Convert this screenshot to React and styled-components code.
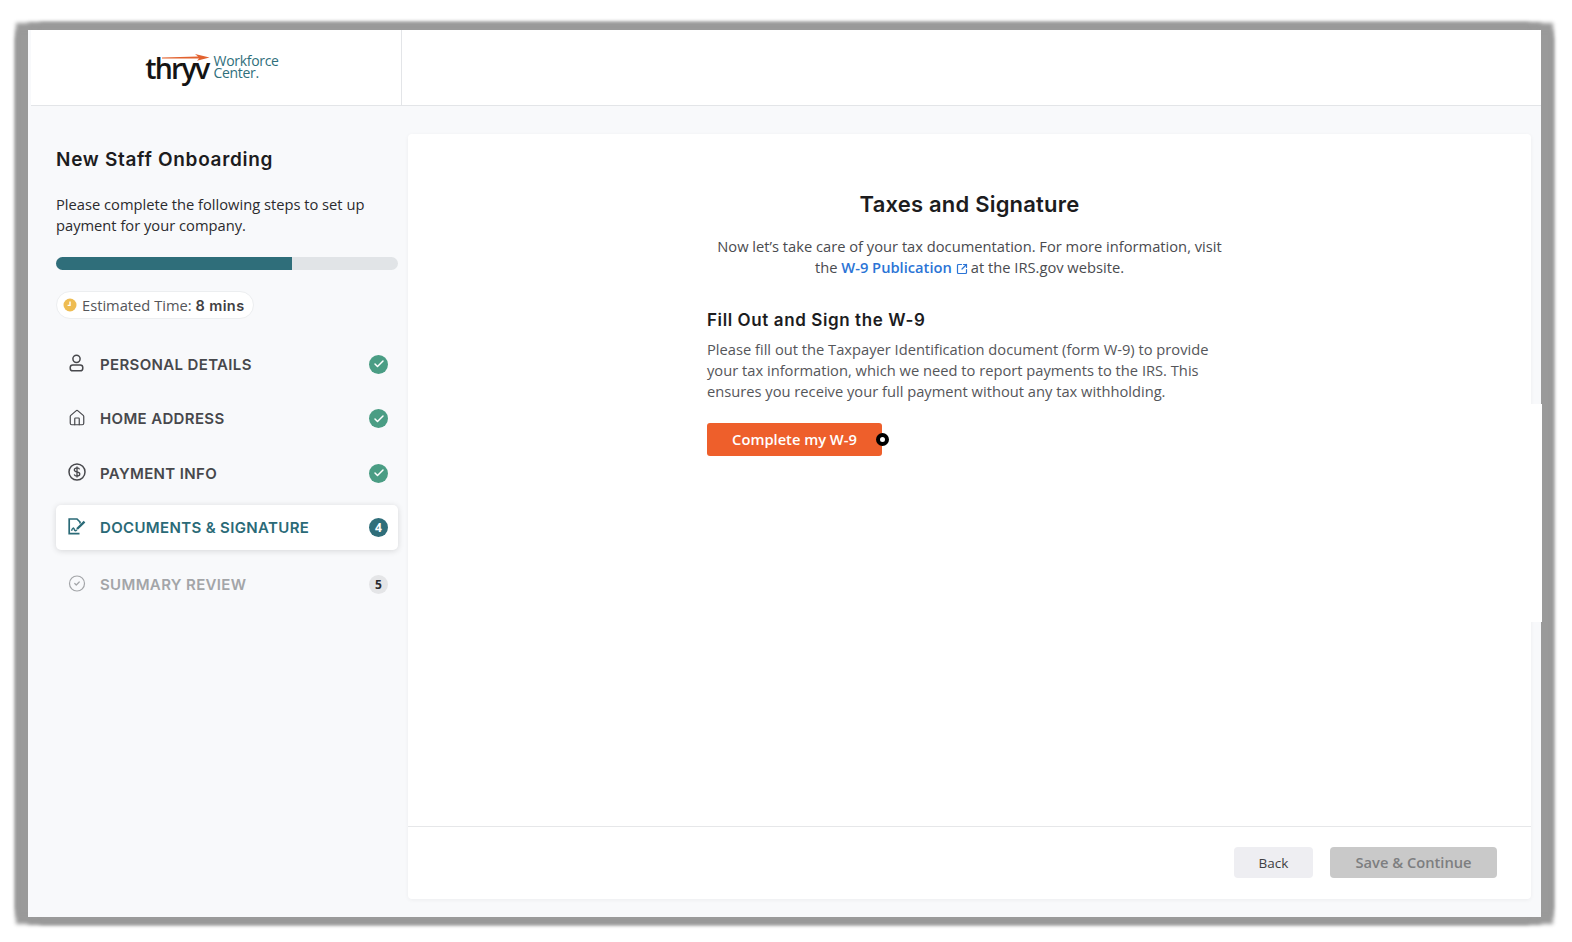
import React from 'react';
import styled, { createGlobalStyle } from 'styled-components';
import { House, CircleCheck, Check, SquareArrowOutUpRight } from 'lucide-react';

const heading = '"Inter", "Liberation Sans", sans-serif';
const body = '"Open Sans", "Liberation Sans", sans-serif';

const Global = createGlobalStyle`
  html, body {
    margin: 0;
    height: 100%;
    overflow: hidden;
    background: #fff;
  }
  * { box-sizing: border-box; }
`;

const Page = styled.div`
  padding: 30px 31px 25px 28px;
  height: 942px;
`;

const Frame = styled.div`
  position: relative;
  height: 887px;
  display: flex;
  flex-direction: column;
  background: #f8f9fb;
  box-shadow: -12px 0 4px #9a9a9a, 12px 0 4px #9a9a9a, 0 7px 4px #9a9a9a, 0 -7px 4px #9a9a9a,
    -12px 7px 4px #9a9a9a, 12px 7px 4px #9a9a9a, -12px -7px 4px #9a9a9a, 12px -7px 4px #9a9a9a;
`;

const SidePatch = styled.div`
  position: absolute;
  right: -1px;
  top: 374px;
  width: 11px;
  height: 218px;
  background: #fff;
`;

const Header = styled.header`
  height: 76px;
  margin-left: 3px;
  display: flex;
  background: #fff;
  border-bottom: 1px solid #e3e5e8;
`;

const LogoCell = styled.div`
  width: 371px;
  display: flex;
  align-items: center;
  justify-content: center;
  gap: 5px;
  padding: 0 8px 0 0;
  border-right: 1px solid #e3e5e8;
`;

const Wordmark = styled.div`
  position: relative;
  font-family: ${body};
  font-size: 28.5px;
  font-weight: 600;
  line-height: 30px;
  letter-spacing: -1.8px;
  color: #141414;
  svg {
    position: absolute;
    left: 17px;
    top: 1px;
  }
`;

const LogoSub = styled.div`
  margin-top: -2px;
  font-family: ${body};
  font-size: 14px;
  line-height: 12px;
  letter-spacing: -0.3px;
  color: #2f6f7c;
`;

const Content = styled.div`
  flex: 1;
  display: flex;
  min-height: 0;
`;

const Sidebar = styled.aside`
  width: 380px;
  padding: 42px 10px 0 28px;
`;

const SideTitle = styled.h1`
  margin: 0 0 22px;
  font-family: ${heading};
  font-size: 19px;
  font-weight: 600;
  line-height: 24px;
  letter-spacing: 0.7px;
  color: #1c1c1e;
`;

const SideText = styled.p`
  margin: 0 0 21px;
  font-family: ${body};
  font-size: 14.7px;
  line-height: 21px;
  color: #2b2b2e;
`;

const Track = styled.div`
  height: 13px;
  margin-bottom: 21px;
  border-radius: 7px;
  background: #e1e4e7;
  overflow: hidden;
`;

const Fill = styled.div`
  height: 100%;
  background: #2f6e7a;
`;

const TimePill = styled.div`
  display: inline-flex;
  align-items: center;
  gap: 5px;
  height: 28px;
  padding: 0 8px 0 6px;
  border: 1px solid #eceef0;
  border-radius: 14px;
  background: #fff;
  font-family: ${body};
  font-size: 14.7px;
  color: #55565a;
  b {
    font-family: ${heading};
    font-size: 14.5px;
    font-weight: 600;
    letter-spacing: 0.4px;
    color: #3f4043;
  }
`;

const Steps = styled.nav`
  display: flex;
  flex-direction: column;
  gap: 9.5px;
  margin-top: 22.5px;
`;

const Step = styled.div`
  display: flex;
  align-items: center;
  height: 45px;
  margin-top: ${p => (p.$state === 'todo' ? '2.5px' : '0')};
  padding: 0 10px 0 12px;
  border-radius: 5px;
  background: ${p => (p.$state === 'active' ? '#fff' : 'transparent')};
  box-shadow: ${p => (p.$state === 'active' ? '0 1px 6px rgba(0,0,0,.14)' : 'none')};
  color: ${p => (p.$state === 'active' ? '#2a6a77' : p.$state === 'todo' ? '#a3a5a8' : '#47484c')};
`;

const StepIcon = styled.span`
  display: flex;
  width: 18px;
  margin-right: 14px;
  margin-top: -2px;
  flex-shrink: 0;
`;

const StepLabel = styled.span`
  flex: 1;
  font-family: ${heading};
  font-size: 15px;
  font-weight: 600;
  letter-spacing: 0.35px;
`;

const Badge = styled.span`
  display: flex;
  align-items: center;
  justify-content: center;
  width: 19px;
  height: 19px;
  border-radius: 50%;
  font-family: ${body};
  font-size: 12px;
  font-weight: 700;
  color: ${p => (p.$state === 'todo' ? '#2b2b2e' : '#fff')};
  background: ${p => (p.$state === 'active' ? '#2f6e7a' : p.$state === 'todo' ? '#e4e5e7' : '#4a9d84')};
`;

const Card = styled.main`
  width: 1123px;
  margin: 28px 0 18px;
  display: flex;
  flex-direction: column;
  background: #fff;
  border-radius: 4px;
  box-shadow: 0 1px 4px rgba(0, 0, 0, 0.05);
`;

const CardBody = styled.section`
  flex: 1;
  width: 525px;
  margin: 0 auto;
  padding-top: 56px;
`;

const CardTitle = styled.h2`
  margin: 0 0 18px;
  text-align: center;
  font-family: ${heading};
  font-size: 22px;
  font-weight: 600;
  line-height: 28px;
  letter-spacing: 0.2px;
  color: #1c1c1e;
`;

const Intro = styled.p`
  margin: 0 0 30px;
  text-align: center;
  font-family: ${body};
  font-size: 14.7px;
  line-height: 21px;
  color: #4a4b4f;
`;

const DocLink = styled.a`
  color: #2b74d6;
  font-weight: 600;
  text-decoration: none;
  svg {
    margin: 0 3px 0 4px;
    vertical-align: -2px;
  }
`;

const SubTitle = styled.h3`
  margin: 0 0 7px;
  font-family: ${heading};
  font-size: 17px;
  font-weight: 600;
  line-height: 24px;
  letter-spacing: 0.6px;
  color: #1c1c1e;
`;

const Para = styled.p`
  margin: 0 0 21px;
  font-family: ${body};
  font-size: 14.7px;
  line-height: 21px;
  color: #55565a;
`;

const Primary = styled.button`
  position: relative;
  display: block;
  width: 175px;
  height: 33px;
  padding: 0 0 2px;
  border: 0;
  border-radius: 3px;
  background: #ee5f2b;
  color: #fff;
  font-family: ${body};
  font-size: 14.7px;
  font-weight: 600;
`;

const Cursor = styled.span`
  position: absolute;
  right: -7px;
  top: 10px;
  width: 13px;
  height: 13px;
  border: 4px solid #000;
  border-radius: 50%;
  background: #fff;
`;

const Footer = styled.footer`
  display: flex;
  justify-content: flex-end;
  gap: 17px;
  height: 73px;
  padding: 20px 34px 0 0;
  border-top: 1px solid #e6e7e9;
`;

const FooterButton = styled.button`
  width: ${p => p.$w}px;
  height: 31px;
  padding: 0 0 ${p => (p.$muted ? 2 : 0)}px;
  border: 0;
  border-radius: 4px;
  font-family: ${body};
  font-size: ${p => (p.$muted ? 14.7 : 13.5)}px;
  font-weight: ${p => (p.$muted ? 600 : 400)};
  color: ${p => (p.$muted ? '#7d7e80' : '#3f4043')};
  background: ${p => (p.$muted ? '#c9c9c9' : '#eeeef2')};
`;

const UserIcon = () => (
  <svg width="17" height="18" viewBox="0 0 17 18" fill="none" stroke="currentColor" strokeWidth="1.5">
    <circle cx="8.5" cy="4.8" r="3.6" />
    <rect x="2.2" y="11" width="12.6" height="5.8" rx="2.6" />
  </svg>
);

const DollarIcon = () => (
  <svg width="18" height="18" viewBox="0 0 18 18" fill="none" stroke="currentColor" strokeWidth="1.5">
    <circle cx="9" cy="9" r="8" />
    <path d="M11.6 6.4C11.2 5.3 10.2 4.9 9 4.9 7.4 4.9 6.3 5.7 6.3 6.9 6.3 9.6 11.8 8.3 11.8 11 11.8 12.3 10.6 13.1 9 13.1 7.7 13.1 6.6 12.5 6.2 11.5M9 3.6v10.8" strokeWidth="1.3" />
  </svg>
);

const DocIcon = () => (
  <svg width="18" height="17" viewBox="0 0 18 17" fill="none" stroke="currentColor" strokeWidth="1.7">
    <path d="M11.5 15.6H1.2V1H9l3 3v1.6" />
    <path d="M3.5 12.8c1.2-3.4 2.2-3.4 2.8-1.2.5 1.5 1.4 1.4 2.6.1" strokeWidth="1.5" />
    <path d="M9 11l7.5-7.4" strokeWidth="2.4" />
  </svg>
);

const ClockDot = () => (
  <svg width="14" height="14" viewBox="0 0 14 14">
    <circle cx="7" cy="7" r="6.5" fill="#eebc52" />
    <path d="M7 3.6V7.4H4.6" fill="none" stroke="#fff" strokeWidth="1.4" />
  </svg>
);

const steps = [
  { label: 'PERSONAL DETAILS', icon: <UserIcon />, state: 'done' },
  { label: 'HOME ADDRESS', icon: <House size={18} strokeWidth={1.6} />, state: 'done' },
  { label: 'PAYMENT INFO', icon: <DollarIcon />, state: 'done' },
  { label: 'DOCUMENTS & SIGNATURE', icon: <DocIcon />, state: 'active', num: 4 },
  { label: 'SUMMARY REVIEW', icon: <CircleCheck size={19} strokeWidth={1.6} />, state: 'todo', num: 5 },
];

export default function App() {
  return (
    <Page>
      <Global />
      <Frame>
        <Header>
          <LogoCell>
            <Wordmark>
              thryv
              <svg width="48" height="7" viewBox="0 0 48 7">
                <path d="M0 3.6L36 2.6L33 0L47.5 3.4L35 6.8L37 4.6L0 4.4Z" fill="#e2622f" />
              </svg>
            </Wordmark>
            <LogoSub>
              Workforce
              <br />
              Center.
            </LogoSub>
          </LogoCell>
        </Header>
        <Content>
          <Sidebar>
            <SideTitle>New Staff Onboarding</SideTitle>
            <SideText>
              Please complete the following steps to set up
              <br />
              payment for your company.
            </SideText>
            <Track>
              <Fill style={{ width: '69%' }} />
            </Track>
            <TimePill>
              <ClockDot />
              <span>
                Estimated Time: <b>8 mins</b>
              </span>
            </TimePill>
            <Steps>
              {steps.map(s => (
                <Step key={s.label} $state={s.state}>
                  <StepIcon>{s.icon}</StepIcon>
                  <StepLabel>{s.label}</StepLabel>
                  <Badge $state={s.state}>{s.num || <Check size={12} strokeWidth={3} />}</Badge>
                </Step>
              ))}
            </Steps>
          </Sidebar>
          <Card>
            <CardBody>
              <CardTitle>Taxes and Signature</CardTitle>
              <Intro>
                Now let’s take care of your tax documentation. For more information, visit
                <br />
                the{' '}
                <DocLink>
                  W-9 Publication
                  <SquareArrowOutUpRight size={12} strokeWidth={2.4} />
                </DocLink>
                at the IRS.gov website.
              </Intro>
              <SubTitle>Fill Out and Sign the W-9</SubTitle>
              <Para>
                Please fill out the Taxpayer Identification document (form W-9) to provide
                <br />
                your tax information, which we need to report payments to the IRS. This
                <br />
                ensures you receive your full payment without any tax withholding.
              </Para>
              <Primary>
                Complete my W-9
                <Cursor />
              </Primary>
            </CardBody>
            <Footer>
              <FooterButton $w={79}>Back</FooterButton>
              <FooterButton $w={167} $muted>
                Save &amp; Continue
              </FooterButton>
            </Footer>
          </Card>
        </Content>
        <SidePatch />
      </Frame>
    </Page>
  );
}
